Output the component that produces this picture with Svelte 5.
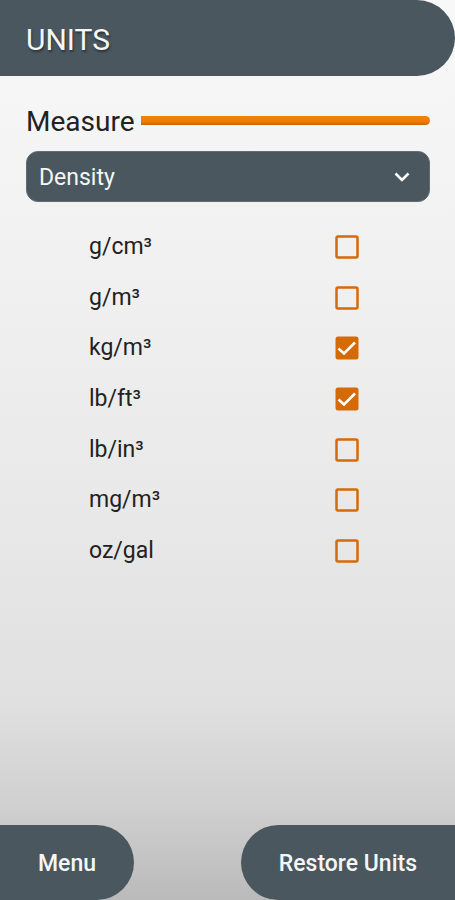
<script lang="ts">
	/** Available measures */
	const measures = ['Density'];

	/** Selected measure */
	let measure = $state('Density');

	/** Units enabled by default */
	const defaults = ['kg/m³', 'lb/ft³'];

	const names = ['g/cm³', 'g/m³', 'kg/m³', 'lb/ft³', 'lb/in³', 'mg/m³', 'oz/gal'];

	let units = $state(names.map((name) => ({ name, checked: defaults.includes(name) })));

	function restore() {
		for (const unit of units) {
			unit.checked = defaults.includes(unit.name);
		}
	}
</script>

<div class="screen">
	<header>
		<h1>UNITS</h1>
	</header>

	<main>
		<div class="heading">
			<label for="measure">Measure</label>
			<span class="line"></span>
		</div>

		<div class="select">
			<select id="measure" bind:value={measure}>
				{#each measures as item}
					<option>{item}</option>
				{/each}
			</select>
			<svg class="chevron" viewBox="0 0 16 10" aria-hidden="true">
				<path d="M1.5 1.5 8 8l6.500-6.500" />
			</svg>
		</div>

		<div class="units">
			{#each units as unit}
				<label class="unit">
					<span>{unit.name}</span>
					<input type="checkbox" bind:checked={unit.checked} />
					<svg class="box" viewBox="0 0 24 24" aria-hidden="true">
						{#if unit.checked}
							<rect class="fill" x="0.500" y="0.500" width="23" height="23" rx="2.500" />
							<path class="tick" d="M3.500 12.500 9 17.500 20 6.500" />
						{:else}
							<rect class="outline" x="1.500" y="1.500" width="21" height="21" rx="1.500" />
						{/if}
					</svg>
				</label>
			{/each}
		</div>
	</main>

	<footer>
		<button class="menu" type="button">Menu</button>
		<button class="restore" type="button" onclick={restore}>Restore Units</button>
	</footer>
</div>

<style>
	:global(body) {
		margin: 0;
	}

	.screen {
		--slate: #4a575e;
		--orange: #d56a08;
		min-height: 100vh;
		display: flex;
		flex-direction: column;
		background: linear-gradient(#f8f8f8 0%, #f2f2f2 25%, #e8e8e8 58%, #e0e0e0 78%, #cfcfcf 90%, #bababa 100%);
		color: #222;
		font-family: Roboto, sans-serif;
	}

	header {
		height: 76px;
		display: flex;
		align-items: center;
		padding: 4px 26px 0;
		box-sizing: border-box;
		border-radius: 0 38px 38px 0;
		background: var(--slate);
		color: #f4f7f8;
	}

	h1 {
		margin: 0;
		font-size: 30px;
		font-weight: 400;
		line-height: 36px;
		text-shadow: 1px 2px 2px #2a3338;
	}

	main {
		flex: 1;
		padding: 28px 25px 0 26px;
	}

	.heading {
		display: flex;
		align-items: center;
		gap: 6px;
		font-size: 28px;
		line-height: 36px;
	}

	.line {
		flex: 1;
		height: 9px;
		margin-bottom: 4px;
		border-radius: 0 5px 5px 0;
		background: linear-gradient(#f08010 0%, #f27c00 60%, #c86400 100%);
	}

	.select {
		position: relative;
		margin-top: 11px;
	}

	select {
		display: block;
		width: 100%;
		height: 51px;
		padding: 2px 48px 0 12px;
		border: 1px solid #5f6c73;
		border-radius: 12px;
		appearance: none;
		background: var(--slate);
		color: #f4f7f8;
		font: 400 23px Roboto, sans-serif;
	}

	.chevron {
		position: absolute;
		top: 21px;
		right: 20px;
		width: 16px;
		height: 10px;
		fill: none;
		stroke: #fff;
		stroke-width: 2.5;
		pointer-events: none;
	}

	.units {
		min-height: 354px;
		margin-top: 20px;
		display: grid;
		grid-auto-rows: 1fr;
	}

	.unit {
		position: relative;
		display: flex;
		align-items: center;
		justify-content: space-between;
		padding: 0 71px 0 63px;
		font-size: 23px;
		line-height: 28px;
	}

	.unit input {
		position: absolute;
		right: 71px;
		width: 24px;
		height: 24px;
		margin: 0;
		opacity: 0;
	}

	.box {
		width: 24px;
		height: 24px;
	}

	.fill {
		fill: var(--orange);
	}

	.outline {
		fill: none;
		stroke: var(--orange);
		stroke-width: 2.5;
	}

	.tick {
		fill: none;
		stroke: #fff;
		stroke-width: 2.5;
	}

	.unit input:focus-visible + .box {
		outline: 2px solid var(--slate);
		outline-offset: 2px;
	}

	footer {
		display: flex;
		justify-content: space-between;
	}

	button {
		height: 75px;
		padding: 2px 38px 0;
		border: none;
		background: var(--slate);
		color: #f4f7f8;
		font: 500 23px Roboto, sans-serif;
		cursor: pointer;
	}

	.menu {
		border-radius: 0 38px 38px 0;
	}

	.restore {
		border-radius: 38px 0 0 38px;
	}
</style>
